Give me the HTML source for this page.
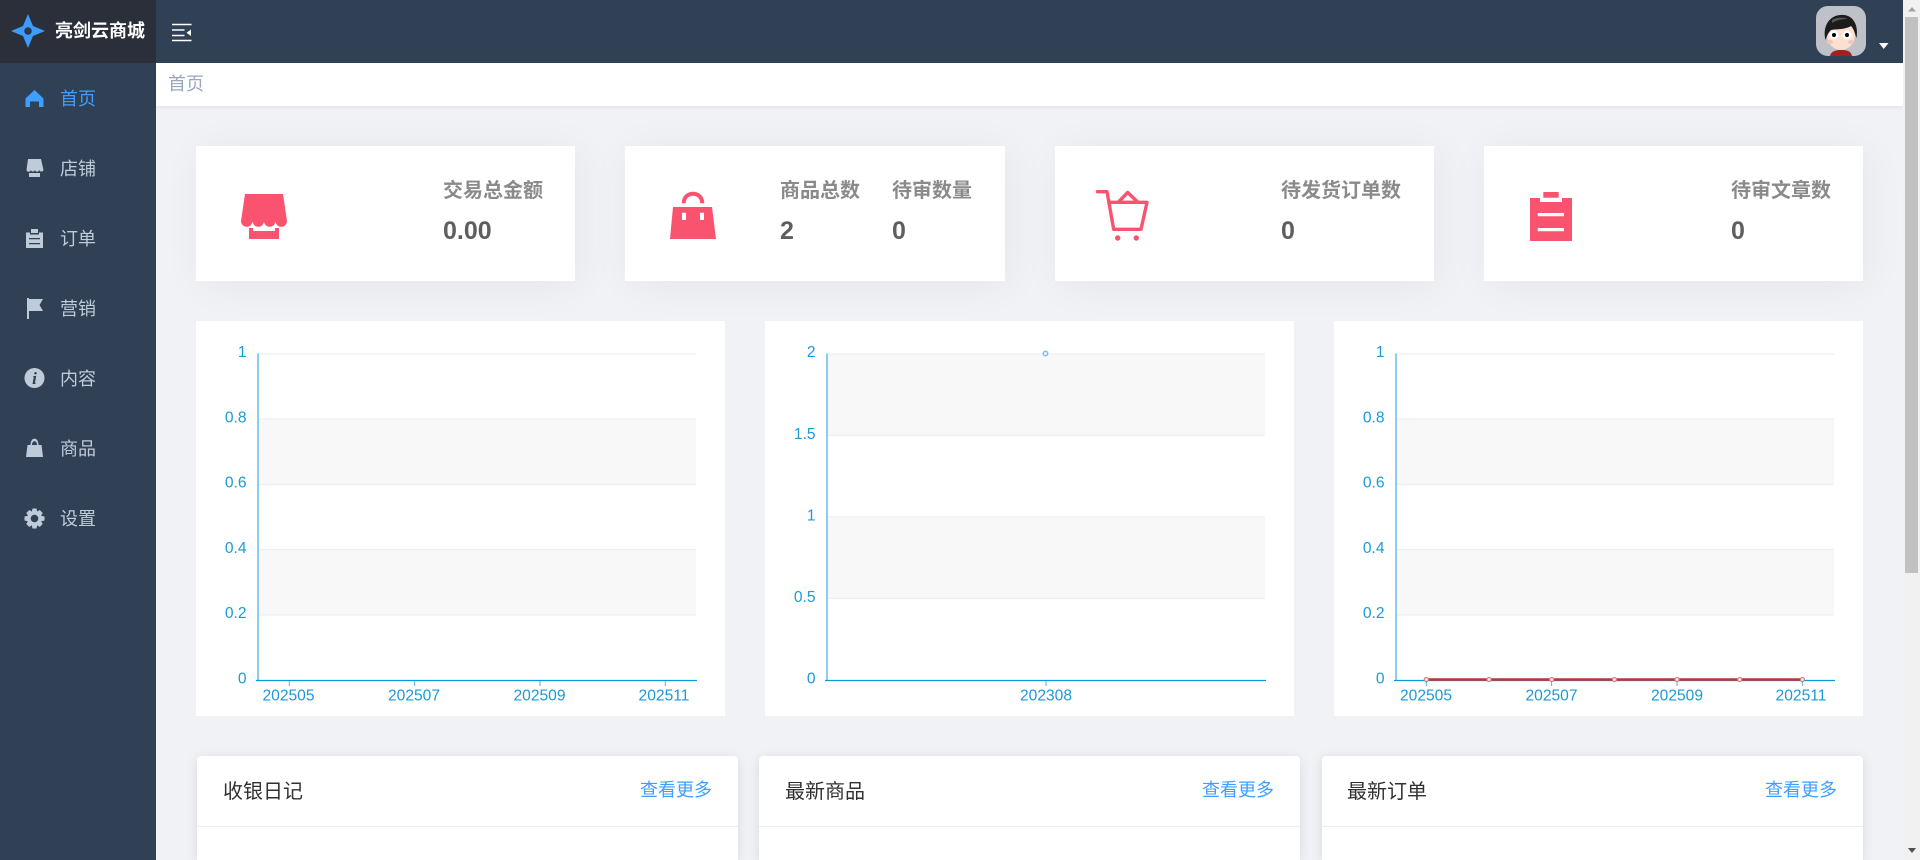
<!DOCTYPE html>
<html lang="zh-CN">
<head>
<meta charset="utf-8">
<title>亮剑云商城</title>
<style>
html,body{margin:0;padding:0;width:1920px;height:860px;overflow:hidden;background:#f0f2f6;font-family:"Liberation Sans","Noto Sans CJK SC",sans-serif}
div{box-sizing:border-box}
#w{position:relative;width:1920px;height:860px;overflow:hidden;background:#f0f2f6}
.a{position:absolute}
.t{position:absolute;white-space:nowrap;line-height:1}
.side{left:0;top:63px;width:156px;height:797px;background:#304156}
.top{left:156px;top:0;width:1747px;height:63px;background:#304156}
.logo{left:0;top:0;width:156px;height:63px;background:#2b2f3a}
.crumb{left:156px;top:63px;width:1747px;height:43px;background:#fff;box-shadow:0 1px 4px rgba(0,21,41,.08)}
.m{left:60px;font-size:18px;color:#bfcbd9}
.stat{top:146px;height:135px;background:#fff;box-shadow:4px 4px 40px rgba(0,0,0,.05)}
.chart{top:321px;height:395px;width:529px;background:#fff}
.lb{top:181px;font-size:20px;font-weight:700;color:#8a8a8a}
.v{top:219px;font-size:25px;font-weight:700;color:#5e5e5e}
.card{top:756px;width:541px;height:104px;background:#fff;border-radius:4px 4px 0 0;box-shadow:0 2px 12px rgba(0,0,0,.1)}
.hl{top:826px;height:1px;width:541px;background:#ebeef5}
.ct{top:782px;font-size:20px;color:#303133}
.mo{top:781px;font-size:18px;color:#409eff}
.sb{left:1903px;top:0;width:17px;height:860px;background:#f1f1f1}
.th{left:1905px;top:17px;width:13px;height:556px;background:#c1c1c1}
svg{position:absolute;overflow:visible}
svg text{font-family:"Liberation Sans",sans-serif;font-size:15.6px;fill:#1b9ad8}
</style>
</head>
<body>
<div id="w">
<div class="a side"></div>
<div class="a top"></div>
<div class="a logo"></div>
<div class="a crumb"></div>

<svg style="left:0;top:0" width="60" height="63" viewBox="0 0 60 63">
<path d="M28 14L33 26L45 31L33 36L28 48L23 36L11 31L23 26Z" fill="#3d9bfb"/>
<circle cx="28" cy="31" r="3.800" fill="#2b3a52"/>
</svg>
<div class="t" style="left:55px;top:22px;font-size:18px;font-weight:700;color:#fff">亮剑云商城</div>

<svg style="left:170px;top:22px" width="24" height="22" viewBox="0 0 24 22">
<path d="M2 2.500H21.500M2 8H14.500M2 13.500H14.500M2 18.500H21.500" stroke="#fff" stroke-width="1.500" fill="none"/>
<path d="M16.500 10.800L21 7.500V14Z" fill="#fff"/>
</svg>

<svg style="left:1816px;top:6px" width="50" height="50" viewBox="0 0 50 50">
<rect width="50" height="50" rx="12" fill="#bfc1c9"/>
<path d="M14 50C15 45 20 44 25 44C31 44 35 45 36 50Z" fill="#a3201c"/>
<ellipse cx="25" cy="29" rx="14" ry="15" fill="#fbe0d0"/>
<path d="M9.500 34C6 20 14 9 25 9C36 8 43 18 40.500 32C38.500 27 38 23 35 20C29 24 18 23 15 24C12 27 11 30 9.500 34Z" fill="#1c1c1c"/>
<path d="M16 14C20 11 28 11 32 13C27 13 21 14 16 17Z" fill="#555"/>
<circle cx="18" cy="29" r="4.500" fill="#fff"/><circle cx="31" cy="29" r="4.500" fill="#fff"/>
<circle cx="18" cy="29" r="2" fill="#000"/><circle cx="31" cy="29" r="2" fill="#000"/>
<ellipse cx="14" cy="36" rx="3" ry="2" fill="#f6c4b8"/><ellipse cx="35" cy="36" rx="3" ry="2" fill="#f6c4b8"/>
</svg>
<svg style="left:1878px;top:42px" width="12" height="8" viewBox="0 0 12 8"><path d="M1 1H10.500L5.700 7Z" fill="#fff"/></svg>

<div class="t" style="left:168px;top:75px;font-size:18px;color:#97a8be">首页</div>

<div class="t m" style="top:90px;color:#409eff">首页</div>
<div class="t m" style="top:160px">店铺</div>
<div class="t m" style="top:230px">订单</div>
<div class="t m" style="top:300px">营销</div>
<div class="t m" style="top:370px">内容</div>
<div class="t m" style="top:440px">商品</div>
<div class="t m" style="top:510px">设置</div>

<svg style="left:0;top:63px" width="60" height="480" viewBox="0 63 60 480">
<path d="M34.500 90L43.500 98.500V107H39V101.500H30V107H25.500V98.500Z" fill="#409eff"/>
<g fill="#bfcbd9">
<path d="M28 159H41L43.500 170A2.200 2.200 0 0 1 39.300 170A2.200 2.200 0 0 1 35 170A2.200 2.200 0 0 1 30.800 170A2.200 2.200 0 0 1 26.500 170Z"/>
<path d="M29 173H40V177H29Z"/>
<path d="M26 232.500H30V234.500H39V232.500H43V248H26ZM31 229H38V233H31ZM29 238V239.300H40V238ZM29 243V244.300H40V243Z" fill-rule="evenodd"/>
<path d="M27 298H29V319H27ZM29 299H43L39.500 305L43 311H29Z"/>
<path d="M34.500 368a10 10 0 1 0 .001 0Z"/>
<path d="M26 457L27.500 445H30.500C30.500 436.500 38.500 436.500 38.500 445H41.500L43 457ZM32 445H37C37 440 32 440 32 445Z" fill-rule="evenodd"/>
<path d="M32.500 508.500H36.500L37.200 511.500L39.700 510L42.700 513L41 515.700L44.500 516.500V520.500L41.200 521.200L42.700 524L39.700 527L37.200 525.300L36.500 528.500H32.500L31.800 525.300L29.300 527L26.300 524L27.800 521.200L24.500 520.500V516.500L28 515.700L26.300 513L29.300 510L31.800 511.500ZM34.500 514.700A3.800 3.800 0 1 0 34.510 514.700Z" fill-rule="evenodd"/>
</g>
<text x="34.500" y="384" style="font-family:'Liberation Serif',serif;font-size:17px;font-weight:700;font-style:italic;fill:#304156" text-anchor="middle">i</text>
</svg>

<div class="a stat" style="left:196px;width:379px"></div>
<div class="a stat" style="left:625px;width:380px"></div>
<div class="a stat" style="left:1055px;width:379px"></div>
<div class="a stat" style="left:1484px;width:379px"></div>

<svg style="left:241px;top:194px" width="46" height="45" viewBox="0 0 46 45" fill="#f9536f">
<path d="M4 0H42L46 27A5.750 5.750 0 0 1 34.500 27A5.750 5.750 0 0 1 23 27A5.750 5.750 0 0 1 11.500 27A5.750 5.750 0 0 1 0 27Z"/>
<path d="M8 34H12V37H34V34H38V45H8Z"/>
</svg>
<svg style="left:670px;top:192px" width="46" height="47" viewBox="0 0 46 47" fill="#f9536f">
<path d="M13.700 11.300C13.700 -1.500 32.300 -1.500 32.300 11.300" fill="none" stroke="#f9536f" stroke-width="4"/>
<path d="M3 15H42L46 47H0ZM12 20.700V28H16V20.700ZM30 20.700V28H34V20.700Z" fill-rule="evenodd"/>
</svg>
<svg style="left:1096px;top:190px" width="53" height="52" viewBox="0 0 53 52">
<path d="M1.500 1.700H11L17.700 39.300H45L51 12.300H13.700M22.700 11.700L31.700 2.500L41.700 12" fill="none" stroke="#f9536f" stroke-width="3.400" stroke-linejoin="round" stroke-linecap="round"/>
<circle cx="21.700" cy="48" r="2.700" fill="#f9536f"/><circle cx="40.300" cy="48" r="2.700" fill="#f9536f"/>
</svg>
<svg style="left:1530px;top:192px" width="42" height="49" viewBox="0 0 42 49" fill="#f9536f">
<path d="M0 6H10V10H32V6H42V49H0ZM7.700 21V24.300H34V21ZM7.700 36V39.300H34V36Z" fill-rule="evenodd"/>
<rect x="13.300" y="0" width="15.400" height="5.700"/>
</svg>

<div class="t lb" style="left:443px">交易总金额</div>
<div class="t v" style="left:443px">0.00</div>
<div class="t lb" style="left:780px">商品总数</div>
<div class="t v" style="left:780px">2</div>
<div class="t lb" style="left:892px">待审数量</div>
<div class="t v" style="left:892px">0</div>
<div class="t lb" style="left:1281px">待发货订单数</div>
<div class="t v" style="left:1281px">0</div>
<div class="t lb" style="left:1731px">待审文章数</div>
<div class="t v" style="left:1731px">0</div>

<div class="a chart" style="left:196px"></div>
<div class="a chart" style="left:765px"></div>
<div class="a chart" style="left:1334px"></div>

<svg style="left:0;top:0" width="1920" height="860" viewBox="0 0 1920 860">
<!-- chart 1 -->
<g>
<rect x="258" y="419" width="438" height="65.500" fill="#f8f8f9"/>
<rect x="258" y="549.500" width="438" height="65.500" fill="#f8f8f9"/>
<path d="M258 354H696M258 419H696M258 484.500H696M258 549.500H696M258 615H696" stroke="#eeeff1" stroke-width="1.200"/>
<path d="M258 353.500V681" stroke="#4fb3e8" stroke-width="1.300"/>
<path d="M256 680.500H697" stroke="#0a98dc" stroke-width="1.200"/>
<path d="M289.300 681V686M414.600 681V686M540 681V686M665.300 681V686" stroke="#4fb3e8" stroke-width="1"/>
<g text-anchor="end">
<text x="246.500" y="357">1</text><text x="246.500" y="422.500">0.8</text><text x="246.500" y="487.500">0.6</text><text x="246.500" y="553">0.4</text><text x="246.500" y="618">0.2</text><text x="246.500" y="683.500">0</text>
</g>
<g text-anchor="middle">
<text x="288.500" y="700.500">202505</text><text x="414" y="700.500">202507</text><text x="539.500" y="700.500">202509</text><text x="664" y="700.500">202511</text>
</g>
</g>
<!-- chart 2 -->
<g>
<rect x="827" y="354" width="438" height="81.500" fill="#f8f8f9"/>
<rect x="827" y="517" width="438" height="81.500" fill="#f8f8f9"/>
<path d="M827 354H1265M827 435.500H1265M827 517H1265M827 598.500H1265" stroke="#eeeff1" stroke-width="1.200"/>
<path d="M827 353.500V681" stroke="#4fb3e8" stroke-width="1.300"/>
<path d="M825 680.500H1266" stroke="#0a98dc" stroke-width="1.200"/>
<path d="M1046 681V686" stroke="#4fb3e8" stroke-width="1"/>
<g text-anchor="end">
<text x="815.500" y="357">2</text><text x="815.500" y="439">1.5</text><text x="815.500" y="520.500">1</text><text x="815.500" y="602">0.5</text><text x="815.500" y="683.500">0</text>
</g>
<text x="1046" y="700.500" text-anchor="middle">202308</text>
<circle cx="1045.500" cy="353.500" r="2.200" fill="#fff" stroke="#7fbdf5" stroke-width="1.500"/>
</g>
<!-- chart 3 -->
<g>
<rect x="1396" y="419" width="438" height="65.500" fill="#f8f8f9"/>
<rect x="1396" y="549.500" width="438" height="65.500" fill="#f8f8f9"/>
<path d="M1396 354H1834M1396 419H1834M1396 484.500H1834M1396 549.500H1834M1396 615H1834" stroke="#eeeff1" stroke-width="1.200"/>
<path d="M1396 353.500V681" stroke="#4fb3e8" stroke-width="1.300"/>
<path d="M1394 680.500H1835" stroke="#0a98dc" stroke-width="1.200"/>
<path d="M1426.400 681V686M1551.600 681V686M1677 681V686M1802.400 681V686" stroke="#4fb3e8" stroke-width="1"/>
<g text-anchor="end">
<text x="1384.500" y="357">1</text><text x="1384.500" y="422.500">0.8</text><text x="1384.500" y="487.500">0.6</text><text x="1384.500" y="553">0.4</text><text x="1384.500" y="618">0.2</text><text x="1384.500" y="683.500">0</text>
</g>
<g text-anchor="middle">
<text x="1426" y="700.500">202505</text><text x="1551.500" y="700.500">202507</text><text x="1677" y="700.500">202509</text><text x="1801" y="700.500">202511</text>
</g>
<path d="M1426.400 679.500H1802.400" stroke="#c23531" stroke-width="2.600"/>
<g fill="#fff" stroke="#d97c78" stroke-width="1.300">
<circle cx="1426.400" cy="679.500" r="2"/><circle cx="1489" cy="679.500" r="2"/><circle cx="1551.700" cy="679.500" r="2"/><circle cx="1614.400" cy="679.500" r="2"/><circle cx="1677" cy="679.500" r="2"/><circle cx="1739.700" cy="679.500" r="2"/><circle cx="1802.400" cy="679.500" r="2"/>
</g>
</g>
</svg>

<div class="a card" style="left:197px"></div>
<div class="a card" style="left:759px"></div>
<div class="a card" style="left:1321.500px"></div>
<div class="a hl" style="left:197px"></div>
<div class="a hl" style="left:759px"></div>
<div class="a hl" style="left:1321.500px"></div>
<div class="t ct" style="left:223px">收银日记</div>
<div class="t ct" style="left:785px">最新商品</div>
<div class="t ct" style="left:1347px">最新订单</div>
<div class="t mo" style="left:640px">查看更多</div>
<div class="t mo" style="left:1202px">查看更多</div>
<div class="t mo" style="left:1765px">查看更多</div>

<div class="a sb"></div>
<div class="a th"></div>
<svg style="left:1903px;top:0" width="17" height="860" viewBox="0 0 17 860">
<path d="M5 11.500L9 7L13 11.500Z" fill="#a3a3a3"/>
<path d="M5 848L9 853L13 848Z" fill="#505050"/>
</svg>
</div>
</body>
</html>
